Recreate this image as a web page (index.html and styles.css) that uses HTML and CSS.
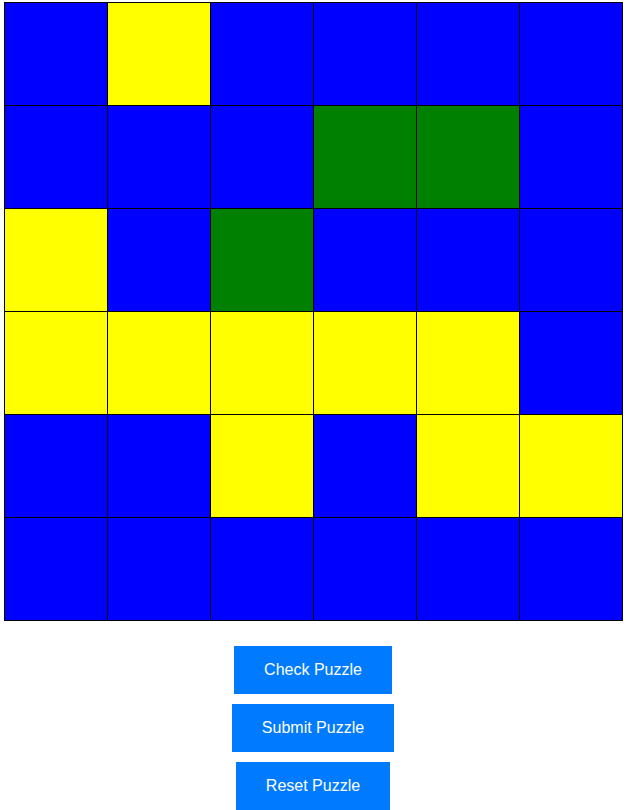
FILE: index.html
```html
<!DOCTYPE html>
<html lang="en">

<head>
    <meta charset="UTF-8">
    <meta name="viewport" content="width=device-width, initial-scale=1.0">
    <title>Puzzle</title>

    <link rel="stylesheet" href="styles.css">
</head>

<body>

    <div class="board">
        <div class="cell blue"></div>
        <div class="cell yellow"></div>
        <div class="cell blue"></div>
        <div class="cell blue"></div>
        <div class="cell blue"></div>
        <div class="cell blue"></div>

        <div class="cell blue"></div>
        <div class="cell blue"></div>
        <div class="cell blue"></div>
        <div class="cell green"></div>
        <div class="cell green"></div>
        <div class="cell blue"></div>

        <div class="cell yellow"></div>
        <div class="cell blue"></div>
        <div class="cell green"></div>
        <div class="cell blue"></div>
        <div class="cell blue"></div>
        <div class="cell blue"></div>

        <div class="cell yellow"></div>
        <div class="cell yellow"></div>
        <div class="cell yellow"></div>
        <div class="cell yellow"></div>
        <div class="cell yellow"></div>
        <div class="cell blue"></div>

        <div class="cell blue"></div>
        <div class="cell blue"></div>
        <div class="cell yellow"></div>
        <div class="cell blue"></div>
        <div class="cell yellow"></div>
        <div class="cell yellow"></div>

        <div class="cell blue"></div>
        <div class="cell blue"></div>
        <div class="cell blue"></div>
        <div class="cell blue"></div>
        <div class="cell blue"></div>
        <div class="cell blue"></div>
    </div>

    <div class="controls">
        <button id="check">Check Puzzle</button>
        <button id="submit">Submit Puzzle</button>
        <button id="reset">Reset Puzzle</button>
    </div>

</body>

</html>
```

FILE: styles.css
```css
* {
    box-sizing: border-box;
    padding: 0;
    margin: 0;
}

body {
    background-color: #fff;
    font-family: 'Liberation Sans', Arial, sans-serif;
}

.board {
    width: 619px;
    margin: 2px 0 0 4px;
    display: grid;
    grid-template-columns: repeat(6, 102px);
    grid-auto-rows: 102px;
    gap: 1px;
    background-color: #000;
    border: 1px solid #000;
}

.blue {
    background-color: #0000ff;
}

.yellow {
    background-color: #ffff00;
}

.green {
    background-color: #008000;
}

.controls {
    display: flex;
    flex-direction: column;
    align-items: center;
    gap: 10px;
    margin-top: 25px;
}

button {
    padding: 15px 30px;
    border: none;
    background-color: #007bff;
    color: #fff;
    font-family: 'Liberation Sans', Arial, sans-serif;
    font-size: 16px;
    cursor: pointer;
}
```
